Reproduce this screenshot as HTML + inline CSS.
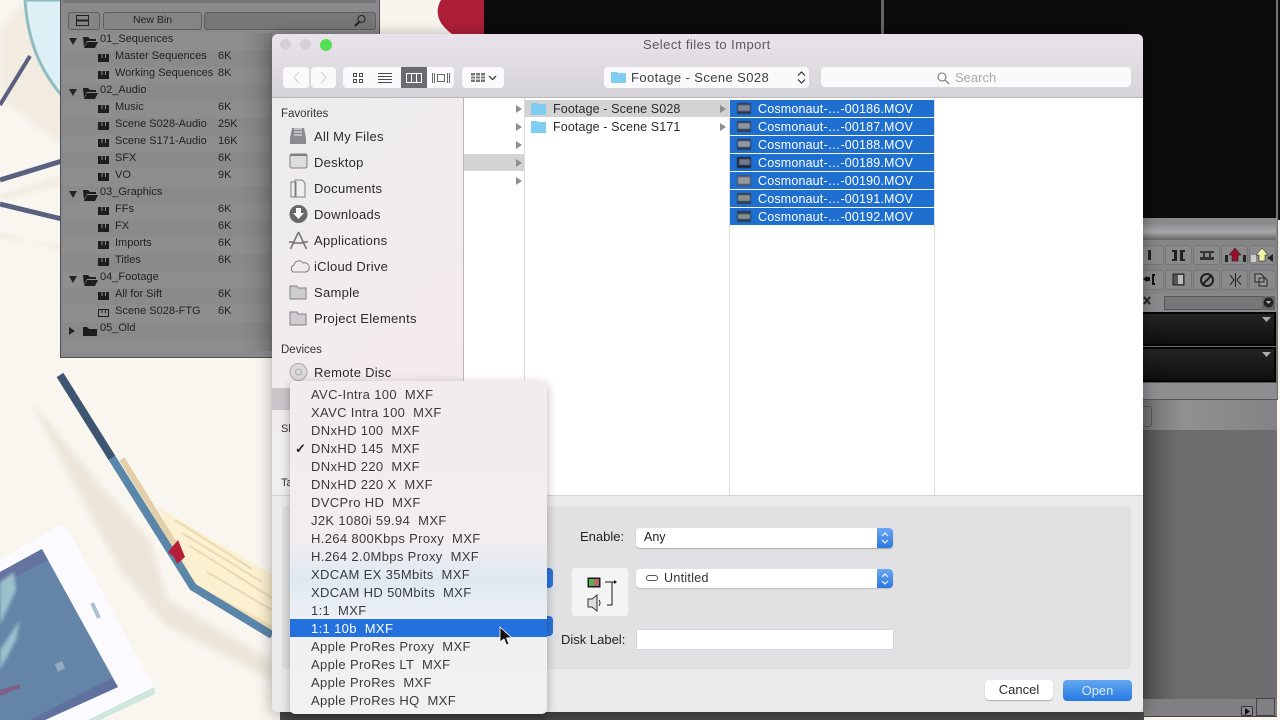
<!DOCTYPE html>
<html><head><meta charset="utf-8"><style>
*{box-sizing:border-box}
html,body{margin:0;padding:0;width:1280px;height:720px;overflow:hidden;background:#f9f6f0;font-family:"Liberation Sans",sans-serif}
.a{position:absolute}
.t{position:absolute;white-space:pre;line-height:18px;height:18px}
.b{font-size:11px;color:#222226;margin-top:1px}
.s{font-size:13px;color:#2b2a2c;left:314px;letter-spacing:.28px;margin-top:1px}
.h{font-size:11.5px;color:#333;left:281px;margin-top:1px}
.f{font-size:12.5px;color:#fff;left:758px;letter-spacing:.17px;background:none}
.r{position:absolute;left:730px;width:204px;height:17px;background:#1f6fd1}
.m{position:absolute;left:21px;font-size:13px;color:#3a3a3e;white-space:pre;line-height:18px;letter-spacing:.35px;margin-top:1px}
.tb{position:absolute;top:67px;height:21px;background:#fbf9fb;border-radius:4px}
.pb{position:absolute;width:27px;height:20px;border:1px solid #767577;border-radius:3px;background:#8a898b}
</style></head><body>

<!-- illustrated background -->
<svg class="a" style="left:0;top:0" width="1280" height="720" viewBox="0 0 1280 720">
<path d="M0 30 L25 0 L40 40 L70 110 L60 145 L25 115 L0 100Z" fill="#f1ebe0" style="filter:blur(4px)"/>
<path d="M0 195 L60 175 L60 185 L0 200Z" fill="#f1ebe1" style="filter:blur(2px)"/>
<path d="M0 232 L60 250 L60 245 L0 238Z" fill="#f1ebe1" style="filter:blur(2px)"/>
<path d="M25 0 C28 45 42 75 70 105 L70 0Z" fill="#dcf0f5" stroke="#8fbcc1" stroke-width="3"/>
<path d="M0 105 L30 56" stroke="#5a6080" stroke-width="4" fill="none"/>
<path d="M0 180 L62 161" stroke="#5a6080" stroke-width="5" fill="none"/>
<path d="M0 204 L62 219" stroke="#5a6080" stroke-width="5" fill="none"/>
<path d="M380 0H436V34H380Z" fill="#f8f5ee"/>
<path d="M485 0V34H452C438 24 434 12 441 0Z" fill="#ad1f37"/>
<!-- shadow stripes -->
<path d="M30 400 L98 482 L150 540 L168 600 L272 660 L272 680 L165 625 L120 570 L85 505Z" fill="#ece6da" style="filter:blur(3px)"/>
<!-- book -->
<path d="M122 459 L172 540 L272 603 L272 638 L194 590Z" fill="#f0dfb8"/>
<path d="M158 507 L272 575 L272 625 L195 585Z" fill="#fbf0cf"/>
<path d="M122 459 L175 545" stroke="#e3d0a8" stroke-width="6"/>
<path d="M175 520 L252 569M182 533 L262 582M190 546 L272 598M207 572 L272 610" stroke="#ead9b5" stroke-width="2"/>
<path d="M60 375 L112 458" stroke="#3d5571" stroke-width="8"/>
<path d="M112 458 L193 587 L272 635" stroke="#5a86aa" stroke-width="8" fill="none" stroke-linejoin="miter"/>
<path d="M168 552 L178 540 L185 557 L177 564 L174 557Z" fill="#b51d38"/>
<path d="M60 525 Q64 523 68 529 L154 688 L88 720 H0 V560Z" fill="#fafaff"/>
<path d="M154 687 L155 694 L100 720 H88Z" fill="#cfe6de"/>
<path d="M0 572 L42 549 L118 687 L45 720 H0Z" fill="#6485a8"/>
<path d="M0 572 L42 549 L48 560 L0 585Z" fill="#64739f"/>
<path d="M118 687 L45 720 H30 L112 678Z" fill="#5e709e"/>
<path d="M0 582 L14 572 L16 590 L0 625Z" fill="#9cc1cd" style="filter:blur(1.500px)"/>
<path d="M0 650 L20 620 L16 640 L0 670Z" fill="#9cc1cd" style="filter:blur(1.500px)"/>
<path d="M0 690 L20 684 L20 688 L0 696Z" fill="#7f5f88"/>
<path d="M55 664 L62 661 L65 668 L58 672Z" fill="#93abbf"/>
<path d="M92 603 L99 618" stroke="#aebfcf" stroke-width="4"/>
</svg>

<!-- bin window -->
<div class="a" style="left:60px;top:0;width:320px;height:358px;background:#8a898b;border:1px solid #505052;border-top:0"></div>
<div class="a" style="left:63px;top:0;width:313px;height:3px;background:#77767a"></div>
<div class="a" style="left:68px;top:12px;width:32px;height:18px;background:#858486;border:1px solid #5f5e60;border-radius:3px"></div>
<svg class="a" style="left:76px;top:15px" width="16" height="12"><rect x=".5" y=".5" width="12" height="10" fill="none" stroke="#222" /><path d="M1 5h12M1 6h12" stroke="#222"/></svg>
<div class="a" style="left:103px;top:12px;width:99px;height:18px;background:#858486;border:1px solid #5f5e60;border-radius:3px;font-size:10.5px;color:#222;text-align:center;line-height:15px">New Bin</div>
<div class="a" style="left:204px;top:12px;width:172px;height:18px;background:#777678;border:1px solid #5f5e60;border-radius:3px"></div>
<svg class="a" style="left:353px;top:14px" width="14" height="14"><circle cx="8.5" cy="5" r="3.5" fill="none" stroke="#222"/><path d="M6 8L2 12" stroke="#222" stroke-width="2"/></svg>
<div class="a" style="left:63px;top:33px;width:208px;height:318px;background:repeating-linear-gradient(#8e8d8f 0 17px,#8a898b 17px 34px)"></div>
<div class="a" style="left:240px;top:33px;width:32px;height:318px;background:linear-gradient(90deg,rgba(0,0,0,0),rgba(0,0,0,.12))"></div>
<svg class="a" style="left:66px;top:30px" width="50" height="310" fill="#1d1d1f">
<path d="M3 8h8l-4 7zM3 59h8l-4 7zM3 161h8l-4 7zM3 246h8l-4 7zM3 297l6 4-6 4z" fill="#242426"/>
<g transform="translate(0,-2)"><path d="M17 9h5l2 2h6v2H21l-3 6zM21 14h11l-3 6H18z"/><path d="M17 60h5l2 2h6v2H21l-3 6zM21 65h11l-3 6H18z"/>
<path d="M17 162h5l2 2h6v2H21l-3 6zM21 167h11l-3 6H18z"/><path d="M17 247h5l2 2h6v2H21l-3 6zM21 252h11l-3 6H18z"/>
<path d="M17 299h4l2 2h8v7H17z"/></g>
<g transform="translate(0,-1)"><path d="M32 25h11v8H32zM32 42h11v8H32zM32 76h11v8H32zM32 93h11v8H32zM32 110h11v8H32zM32 127h11v8H32zM32 144h11v8H32zM32 178h11v8H32zM32 195h11v8H32zM32 212h11v8H32zM32 229h11v8H32zM32 263h11v8H32z"/>
<path d="M36 25v4M39.500 25v4M36 42v4M39.500 42v4M36 76v4M39.500 76v4M36 93v4M39.500 93v4M36 110v4M39.500 110v4M36 127v4M39.500 127v4M36 144v4M39.500 144v4M36 178v4M39.500 178v4M36 195v4M39.500 195v4M36 212v4M39.500 212v4M36 229v4M39.500 229v4M36 263v4M39.500 263v4" stroke="#8c8b8d"/>
<rect x="32.5" y="280.500" width="10" height="7" fill="none" stroke="#1d1d1f"/><path d="M36 281v3M39.500 281v3" stroke="#1d1d1f"/></g>
</svg>
<div class="t b" style="left:100px;top:29px">01_Sequences</div>
<div class="t b" style="left:115px;top:46px">Master Sequences</div><div class="t b" style="left:218px;top:46px">6K</div>
<div class="t b" style="left:115px;top:63px">Working Sequences</div><div class="t b" style="left:218px;top:63px">8K</div>
<div class="t b" style="left:100px;top:80px">02_Audio</div>
<div class="t b" style="left:115px;top:97px">Music</div><div class="t b" style="left:218px;top:97px">6K</div>
<div class="t b" style="left:115px;top:114px">Scene S028-Audio</div><div class="t b" style="left:218px;top:114px">25K</div>
<div class="t b" style="left:115px;top:131px">Scene S171-Audio</div><div class="t b" style="left:218px;top:131px">16K</div>
<div class="t b" style="left:115px;top:148px">SFX</div><div class="t b" style="left:218px;top:148px">6K</div>
<div class="t b" style="left:115px;top:165px">VO</div><div class="t b" style="left:218px;top:165px">9K</div>
<div class="t b" style="left:100px;top:182px">03_Graphics</div>
<div class="t b" style="left:115px;top:199px">FFs</div><div class="t b" style="left:218px;top:199px">6K</div>
<div class="t b" style="left:115px;top:216px">FX</div><div class="t b" style="left:218px;top:216px">6K</div>
<div class="t b" style="left:115px;top:233px">Imports</div><div class="t b" style="left:218px;top:233px">6K</div>
<div class="t b" style="left:115px;top:250px">Titles</div><div class="t b" style="left:218px;top:250px">6K</div>
<div class="t b" style="left:100px;top:267px">04_Footage</div>
<div class="t b" style="left:115px;top:284px">All for Sift</div><div class="t b" style="left:218px;top:284px">6K</div>
<div class="t b" style="left:115px;top:301px">Scene S028-FTG</div><div class="t b" style="left:218px;top:301px">6K</div>
<div class="t b" style="left:100px;top:318px">05_Old</div>

<!-- right app area -->
<div class="a" style="left:484px;top:0;width:796px;height:220px;background:#0c0c0e"></div>
<div class="a" style="left:881px;top:0;width:3px;height:34px;background:#666"></div>
<div class="a" style="left:1276px;top:0;width:2px;height:220px;background:#77767a"></div>
<div class="a" style="left:1143px;top:218px;width:135px;height:182px;background:#6e6d6f"></div>
<div class="a" style="left:1143px;top:218px;width:134px;height:26px;background:#8a898b"></div>
<div class="a" style="left:1143px;top:224px;width:133px;height:16px;background:linear-gradient(#8e8d8f,#a8a7a9,#666)"></div>
<div class="a" style="left:1143px;top:240px;width:134px;height:54px;background:#858486"></div>
<div class="pb" style="left:1137px;top:245px"></div><div class="pb" style="left:1165px;top:245px"></div><div class="pb" style="left:1193px;top:245px"></div><div class="pb" style="left:1221px;top:245px"></div><div class="pb" style="left:1249px;top:245px"></div>
<div class="pb" style="left:1137px;top:270px"></div><div class="pb" style="left:1165px;top:270px"></div><div class="pb" style="left:1193px;top:270px"></div><div class="pb" style="left:1221px;top:270px"></div><div class="pb" style="left:1249px;top:270px"></div>
<svg class="a" style="left:1143px;top:245px" width="134" height="46">
<path d="M5 5h3v10H5z" fill="#222"/><path d="M29 5h5v11h-5v-2h2V7h-2zM37 5h5v2h-2v7h2v2h-5z" fill="#222"/>
<path d="M57 6h14v2H57zM57 12h14v3H57zM60 8h2v4h-2zM66 8h2v4h-2z" fill="#333"/>
<path d="M92 3l6 7h-3v6h-6v-6h-3z" fill="#96122f" stroke="#111" stroke-width=".5"/><path d="M82 10h3v7h-3zM100 10h3v7h-3z" fill="#222"/>
<path d="M119 3l6 7h-3v6h-6v-6h-3z" fill="#f1f1a8" stroke="#111" stroke-width=".5"/><path d="M108 10h5v7h-5z" fill="#ccc"/><path d="M124 13l6-4v8z" fill="#222"/>
<path d="M0 34l4-3v6zM4 32h3v4H4zM9 29h3v2h-1v7h1v2H9z" fill="#111"/>
<path d="M30 29h11v11H30z" fill="#555" stroke="#222"/><path d="M35 30h5v9h-5z" fill="#bbb"/>
<circle cx="64" cy="35" r="6" fill="none" stroke="#222" stroke-width="2"/><path d="M59 40l10-10" stroke="#222" stroke-width="2"/>
<path d="M87 30l4 5-4 5M98 30l-4 5 4 5M92.500 28v14" fill="none" stroke="#222"/>
<path d="M112 29h6l3 3v5h-9zM116 33h6l2 2v6h-8z" fill="#999" stroke="#222"/>
</svg>
<div class="a" style="left:1143px;top:294px;width:134px;height:18px;background:#8a898b"></div>
<svg class="a" style="left:1143px;top:296px" width="10" height="10"><path d="M1 1l6 7M7 1L1 8" stroke="#222" stroke-width="2"/></svg>
<div class="a" style="left:1164px;top:296px;width:100px;height:14px;background:#777678;border:1px solid #555"></div>
<div class="a" style="left:1262px;top:296px;width:13px;height:14px;background:#666"></div>
<svg class="a" style="left:1263px;top:297px" width="11" height="11"><circle cx="5.500" cy="5.500" r="5" fill="#222"/><path d="M3 4h5L5.500 7z" fill="#bbb"/></svg>
<div class="a" style="left:1143px;top:312px;width:133px;height:34px;background:linear-gradient(#242425,#0f0f10);border:2px solid #050505;border-left:0"></div>
<div class="a" style="left:1143px;top:347px;width:133px;height:35px;background:linear-gradient(#242425,#0f0f10);border:2px solid #050505;border-left:0"></div>
<svg class="a" style="left:1260px;top:314px" width="14" height="60"><path d="M2 3h9l-4.500 5zM2 38h9l-4.500 5z" fill="#aaa"/></svg>
<div class="a" style="left:1143px;top:382px;width:134px;height:18px;background:#8e8d8f;border-top:1px solid #555;border-bottom:1px solid #555"></div>
<div class="a" style="left:1143px;top:400px;width:134px;height:30px;background:linear-gradient(90deg,#6f6e70,#919092 30%,#838284)"></div>
<div class="a" style="left:1143px;top:406px;width:9px;height:21px;border:1px solid #555;border-left:0;border-radius:0 3px 3px 0"></div>
<div class="a" style="left:1143px;top:430px;width:134px;height:269px;background:linear-gradient(90deg,#505052,#6c6b6d 25%,#6d6c6e)"></div>
<div class="a" style="left:1143px;top:699px;width:134px;height:18px;background:#807f81;border-bottom:1px solid #444"></div>
<div class="a" style="left:1241px;top:706px;width:12px;height:10px;border:1px solid #333;border-radius:2px;background:#8a898b"></div>
<svg class="a" style="left:1244px;top:707px" width="8" height="9"><path d="M1 1l5 3.500-5 3.500z" fill="#111"/></svg>
<div class="a" style="left:1256px;top:698px;width:19px;height:18px;border:1px solid #444"></div>
<!-- bottom strip under dialog -->
<div class="a" style="left:280px;top:712px;width:864px;height:8px;background:#4a4a4c"></div>

<!-- dialog -->
<div class="a" style="left:272px;top:34px;width:871px;height:678px;border-radius:6px;box-shadow:0 2px 16px rgba(0,0,0,.35)"></div>
<div class="a" style="left:272px;top:34px;width:871px;height:678px;background:#ebebee;border-radius:6px;overflow:hidden">
 <div class="a" style="left:0;top:0;width:871px;height:64px;background:linear-gradient(#e9e2ea,#e0dce2 50%,#d6d3d9);border-bottom:1px solid #b9b7bb"></div>
 <div class="a" style="left:0;top:64px;width:192px;height:331px;background:linear-gradient(135deg,#ebebed,#f2ecee 50%,#f4eaec);border-right:1px solid #b7b5b8"></div>
 <div class="a" style="left:192px;top:64px;width:679px;height:397px;background:#fff"></div>
 <div class="a" style="left:0;top:395px;width:192px;height:66px;background:#f1eeef"></div>
 <div class="a" style="left:0;top:354px;width:192px;height:22px;background:#c9c6c9"></div>
 <div class="a" style="left:252px;top:64px;width:1px;height:397px;background:#dcdcdc"></div>
 <div class="a" style="left:457px;top:64px;width:1px;height:397px;background:#dcdcdc"></div>
 <div class="a" style="left:662px;top:64px;width:1px;height:397px;background:#dcdcdc"></div>
 <div class="a" style="left:192px;top:120px;width:60px;height:17px;background:#d3d3d3"></div>
 <div class="a" style="left:253px;top:66px;width:204px;height:17px;background:#d3d3d3"></div>
 <div class="a" style="left:0;top:461px;width:871px;height:1px;background:#d4d4d6"></div>
 <div class="a" style="left:10px;top:472px;width:849px;height:163px;background:#e1e1e4;border-radius:4px"></div>
</div>
<div class="a" style="left:280px;top:39px;width:11px;height:11px;border-radius:50%;background:#d4d0d5"></div>
<div class="a" style="left:300px;top:39px;width:11px;height:11px;border-radius:50%;background:#d4d0d5"></div>
<div class="a" style="left:320px;top:39px;width:12px;height:12px;border-radius:50%;background:#52e052"></div>
<div class="t" style="left:643px;top:36px;font-size:13px;color:#5c595e;letter-spacing:.45px">Select files to Import</div>

<!-- toolbar -->
<div class="tb" style="left:283px;width:26px"></div><div class="tb" style="left:311px;width:25px"></div>
<svg class="a" style="left:283px;top:67px" width="53" height="21"><path d="M16 5l-5 5.500 5 5.500M38 5l5 5.500-5 5.500" fill="none" stroke="#d6d6d6" stroke-width="1.200"/></svg>
<div class="tb" style="left:343px;width:111px"></div>
<div class="a" style="left:401px;top:67px;width:26px;height:21px;background:#6c696f"></div>
<svg class="a" style="left:343px;top:67px" width="111" height="21" fill="none" stroke="#4a4a4c">
<rect x="10.500" y="6.500" width="3" height="3"/><rect x="16.500" y="6.500" width="3" height="3"/><rect x="10.500" y="12.500" width="3" height="3"/><rect x="16.500" y="12.500" width="3" height="3"/>
<path d="M35 6.500h14M35 9.500h14M35 12.500h14M35 15.500h14"/>
<rect x="63.500" y="6.500" width="15" height="9" stroke="#fff"/><path d="M68.500 7v8M73.500 7v8" stroke="#fff"/>
<path d="M89.500 6v10M91.500 6v10M106.500 6v10M104.500 6v10" stroke="#666"/><rect x="94.500" y="7.500" width="7" height="7" stroke="#666"/>
</svg>
<div class="tb" style="left:462px;width:42px"></div>
<svg class="a" style="left:462px;top:67px" width="42" height="21"><path d="M9 6h14v9H9z" fill="#777"/><path d="M9 9h14M9 12h14M13.500 6v9M18.500 6v9" stroke="#fff"/><path d="M27 9l3.500 3.500L34 9" fill="none" stroke="#444" stroke-width="1.300"/></svg>
<div class="tb" style="left:604px;width:205px"></div>
<svg class="a" style="left:610px;top:70px" width="18" height="14"><path d="M1 2h6l1 1h8v10H1z" fill="#7fcdf0"/></svg>
<div class="t" style="left:631px;top:68px;font-size:13px;color:#3f3f42;letter-spacing:.4px;margin-top:1px">Footage - Scene S028</div>
<svg class="a" style="left:796px;top:70px" width="12" height="15"><path d="M2 5.500L5.500 2 9 5.500M2 9.500L5.500 13 9 9.500" fill="none" stroke="#333" stroke-width="1.200"/></svg>
<div class="tb" style="left:821px;width:310px;height:20px"></div>
<svg class="a" style="left:936px;top:71px" width="14" height="14"><circle cx="6" cy="6" r="4" fill="none" stroke="#777" stroke-width="1.100"/><path d="M9 9l4 4" stroke="#777" stroke-width="1.200"/></svg>
<div class="t" style="left:955px;top:69px;font-size:13px;color:#aaa9ad">Search</div>

<!-- sidebar -->
<div class="t h" style="top:104px">Favorites</div>
<div class="t s" style="top:127px">All My Files</div>
<div class="t s" style="top:153px">Desktop</div>
<div class="t s" style="top:179px">Documents</div>
<div class="t s" style="top:205px">Downloads</div>
<div class="t s" style="top:231px">Applications</div>
<div class="t s" style="top:257px">iCloud Drive</div>
<div class="t s" style="top:283px">Sample</div>
<div class="t s" style="top:309px">Project Elements</div>
<div class="t h" style="top:340px">Devices</div>
<div class="t s" style="top:363px">Remote Disc</div>
<div class="t" style="left:281px;top:420px;font-size:11px;color:#333">Sh</div>
<div class="t" style="left:281px;top:474px;font-size:11px;color:#333">Ta</div>
<svg class="a" style="left:288px;top:126px" width="24" height="260">
<path d="M4 2h12l2 10v6H2v-6z" fill="#8c8a8e"/><path d="M6 3h8M6 6h8M6 9h8" stroke="#eee"/>
<rect x="2" y="28" width="17" height="14" rx="2" fill="#ddd" stroke="#807e82"/><rect x="2" y="28" width="17" height="2" fill="#807e82"/>
<path d="M7 54h7l3 3v14H7zM3 56h5v15H3z" fill="#f0eef0" stroke="#807e82"/>
<circle cx="10.500" cy="88" r="9" fill="#69676b"/><path d="M8 82h5v5h3l-5.500 6-5.500-6h3z" fill="#fff"/>
<path d="M10.500 106l-8 17M10.500 106l8 17M5 117h11M1 116h5M15 116h5" fill="none" stroke="#737175" stroke-width="1.500"/>
<path d="M5 146a4 4 0 0 1 1-7a5 5 0 0 1 9-2a4 4 0 0 1 3 9z" fill="none" stroke="#807e82"/>
<path d="M2 160h7l1 2h8v11H2z" fill="#cfcdd0" stroke="#807e82"/>
<path d="M2 186h7l1 2h8v11H2z" fill="#cfcdd0" stroke="#807e82"/>
<circle cx="10.500" cy="246" r="8.500" fill="#dbd9dc" stroke="#aaa"/><circle cx="10.500" cy="246" r="3" fill="none" stroke="#aaa"/>
</svg>

<!-- column content -->
<svg class="a" style="left:515px;top:102px" width="215" height="84" fill="#8d8d8d"><path d="M1 3l6 4-6 4zM1 21l6 4-6 4zM1 39l6 4-6 4zM1 57l6 4-6 4zM1 75l6 4-6 4zM205 3l6 4-6 4zM205 21l6 4-6 4z"/></svg>
<svg class="a" style="left:530px;top:101px" width="18" height="34" fill="#7fcdf0"><path d="M1 2h6l1 1h8v11H1zM1 20h6l1 1h8v11H1z"/></svg>
<div class="t" style="left:553px;top:100px;font-size:12.5px;color:#2a2a2c;letter-spacing:.12px">Footage - Scene S028</div>
<div class="t" style="left:553px;top:118px;font-size:12.5px;color:#2a2a2c;letter-spacing:.12px">Footage - Scene S171</div>

<div class="r" style="top:100px"></div><div class="r" style="top:118px"></div><div class="r" style="top:136px"></div><div class="r" style="top:154px"></div><div class="r" style="top:172px"></div><div class="r" style="top:190px"></div><div class="r" style="top:208px"></div>
<svg class="a" style="left:737px;top:102px;filter:blur(.5px)" width="16" height="124">
<rect y="1" width="14" height="11" fill="#2c3a52"/><rect y="3" x="1" width="12" height="6" fill="#7f8896"/>
<rect y="19" width="14" height="11" fill="#2c3a52"/><rect y="21" x="1" width="12" height="6" fill="#8a92a0"/>
<rect y="37" width="14" height="11" fill="#2c3a52"/><rect y="39" x="1" width="12" height="6" fill="#8f99a8"/>
<rect y="55" width="14" height="11" fill="#1c2436"/><rect y="57" x="2" width="11" height="6" fill="#6f7a8a"/>
<rect y="73" width="14" height="11" fill="#404e68"/><rect y="75" x="1" width="12" height="7" fill="#99979c"/>
<rect y="91" width="14" height="11" fill="#2c3a52"/><rect y="93" x="1" width="12" height="6" fill="#8a928f"/>
<rect y="109" width="14" height="11" fill="#2c3a52"/><rect y="112" x="1" width="12" height="5" fill="#809090"/>
</svg>
<div class="t f" style="top:100px">Cosmonaut-…-00186.MOV</div>
<div class="t f" style="top:118px">Cosmonaut-…-00187.MOV</div>
<div class="t f" style="top:136px">Cosmonaut-…-00188.MOV</div>
<div class="t f" style="top:154px">Cosmonaut-…-00189.MOV</div>
<div class="t f" style="top:172px">Cosmonaut-…-00190.MOV</div>
<div class="t f" style="top:190px">Cosmonaut-…-00191.MOV</div>
<div class="t f" style="top:208px">Cosmonaut-…-00192.MOV</div>

<!-- options -->
<div class="t" style="left:580px;top:528px;font-size:13px;color:#222">Enable:</div>
<div class="a" style="left:636px;top:528px;width:257px;height:20px;background:#fff;border-radius:4px;box-shadow:0 1px 1px #aaa"></div>
<div class="a" style="left:877px;top:528px;width:16px;height:20px;background:linear-gradient(#6ba8f2,#2a77e0);border-radius:0 4px 4px 0"></div>
<div class="t" style="left:644px;top:528px;font-size:12.5px;color:#222">Any</div>
<div class="a" style="left:636px;top:569px;width:257px;height:19px;background:#fff;border-radius:4px;box-shadow:0 1px 1px #bbb"></div>
<div class="a" style="left:877px;top:569px;width:16px;height:19px;background:linear-gradient(#6ba8f2,#2a77e0);border-radius:0 4px 4px 0"></div>
<svg class="a" style="left:877px;top:528px" width="16" height="62"><path d="M5 8l3-3 3 3M5 12l3 3 3-3M5 49l3-3 3 3M5 53l3 3 3-3" fill="none" stroke="#fff" stroke-width="1.100"/></svg>
<svg class="a" style="left:645px;top:573px" width="14" height="10"><rect x="1.500" y="2.500" width="11" height="5" rx="2.500" fill="none" stroke="#555"/></svg>
<div class="t" style="left:664px;top:569px;font-size:12.5px;color:#333;letter-spacing:.3px">Untitled</div>
<div class="a" style="left:572px;top:568px;width:56px;height:48px;background:#f4f4f6;border-radius:3px"></div>
<svg class="a" style="left:572px;top:568px" width="56" height="48">
<rect x="15.500" y="9.500" width="13" height="10" fill="#1a1a1a"/><rect x="17" y="11" width="5" height="7" fill="#58b058"/><rect x="22" y="11" width="5" height="7" fill="#b86a6a"/>
<path d="M33 14h11M40 14v23h-5" fill="none" stroke="#1a1a1a"/><path d="M45 14l-3-2v4z" fill="#111"/>
<path d="M16 31h4l5-4v16l-5-4h-4z" fill="#ddd" stroke="#333"/><path d="M27 32q2 3 0 6" fill="none" stroke="#333"/>
</svg>
<div class="t" style="left:561px;top:631px;font-size:13px;color:#222">Disk Label:</div>
<div class="a" style="left:637px;top:630px;width:256px;height:19px;background:#fff;box-shadow:0 0 1px #aaa"></div>
<div class="a" style="left:985px;top:680px;width:68px;height:20px;background:#fff;border-radius:4px;box-shadow:0 1px 1px #aaa;font-size:13px;color:#2a2a2c;text-align:center;line-height:20px">Cancel</div>
<div class="a" style="left:1063px;top:680px;width:69px;height:21px;background:linear-gradient(#63a8f2,#2579e2);border-radius:4px;font-size:13px;color:#dbe9fb;text-align:center;line-height:21px">Open</div>
<div class="a" style="left:540px;top:568px;width:13px;height:20px;background:#2a74dc;border-radius:0 4px 4px 0"></div>
<div class="a" style="left:540px;top:616px;width:13px;height:20px;background:#2a74dc;border-radius:0 4px 4px 0"></div>

<!-- popup menu -->
<div class="a" style="left:290px;top:381px;width:257px;height:333px;background:linear-gradient(#f3ecee 0,#f2edef 48%,#dfe9f2 60%,#e6eef4 66%,#f0f0f3 74%,#f1f1f3);border-radius:5px;box-shadow:0 3px 10px rgba(0,0,0,.3);overflow:hidden">
<div class="a" style="left:0;top:238px;width:257px;height:18px;background:#2470dc"></div>
<div class="m" style="top:4px">AVC-Intra 100  MXF</div>
<div class="m" style="top:22px">XAVC Intra 100  MXF</div>
<div class="m" style="top:40px">DNxHD 100  MXF</div>
<div class="m" style="top:58px">DNxHD 145  MXF</div>
<div class="m" style="top:58px;left:5px;color:#222;font-size:13px;font-weight:bold;letter-spacing:0">✓</div>
<div class="m" style="top:76px">DNxHD 220  MXF</div>
<div class="m" style="top:94px">DNxHD 220 X  MXF</div>
<div class="m" style="top:112px">DVCPro HD  MXF</div>
<div class="m" style="top:130px">J2K 1080i 59.94  MXF</div>
<div class="m" style="top:148px">H.264 800Kbps Proxy  MXF</div>
<div class="m" style="top:166px">H.264 2.0Mbps Proxy  MXF</div>
<div class="m" style="top:184px">XDCAM EX 35Mbits  MXF</div>
<div class="m" style="top:202px">XDCAM HD 50Mbits  MXF</div>
<div class="m" style="top:220px">1:1  MXF</div>
<div class="m" style="top:238px;color:#fff">1:1 10b  MXF</div>
<div class="m" style="top:256px">Apple ProRes Proxy  MXF</div>
<div class="m" style="top:274px">Apple ProRes LT  MXF</div>
<div class="m" style="top:292px">Apple ProRes  MXF</div>
<div class="m" style="top:310px">Apple ProRes HQ  MXF</div>
</div>
<svg class="a" style="left:498px;top:625px" width="16" height="22"><path d="M2 2v15l4-3 2.500 6 2.500-1-2.500-6 5-.5z" fill="#111" stroke="#fff" stroke-width=".8"/></svg>
</body></html>
